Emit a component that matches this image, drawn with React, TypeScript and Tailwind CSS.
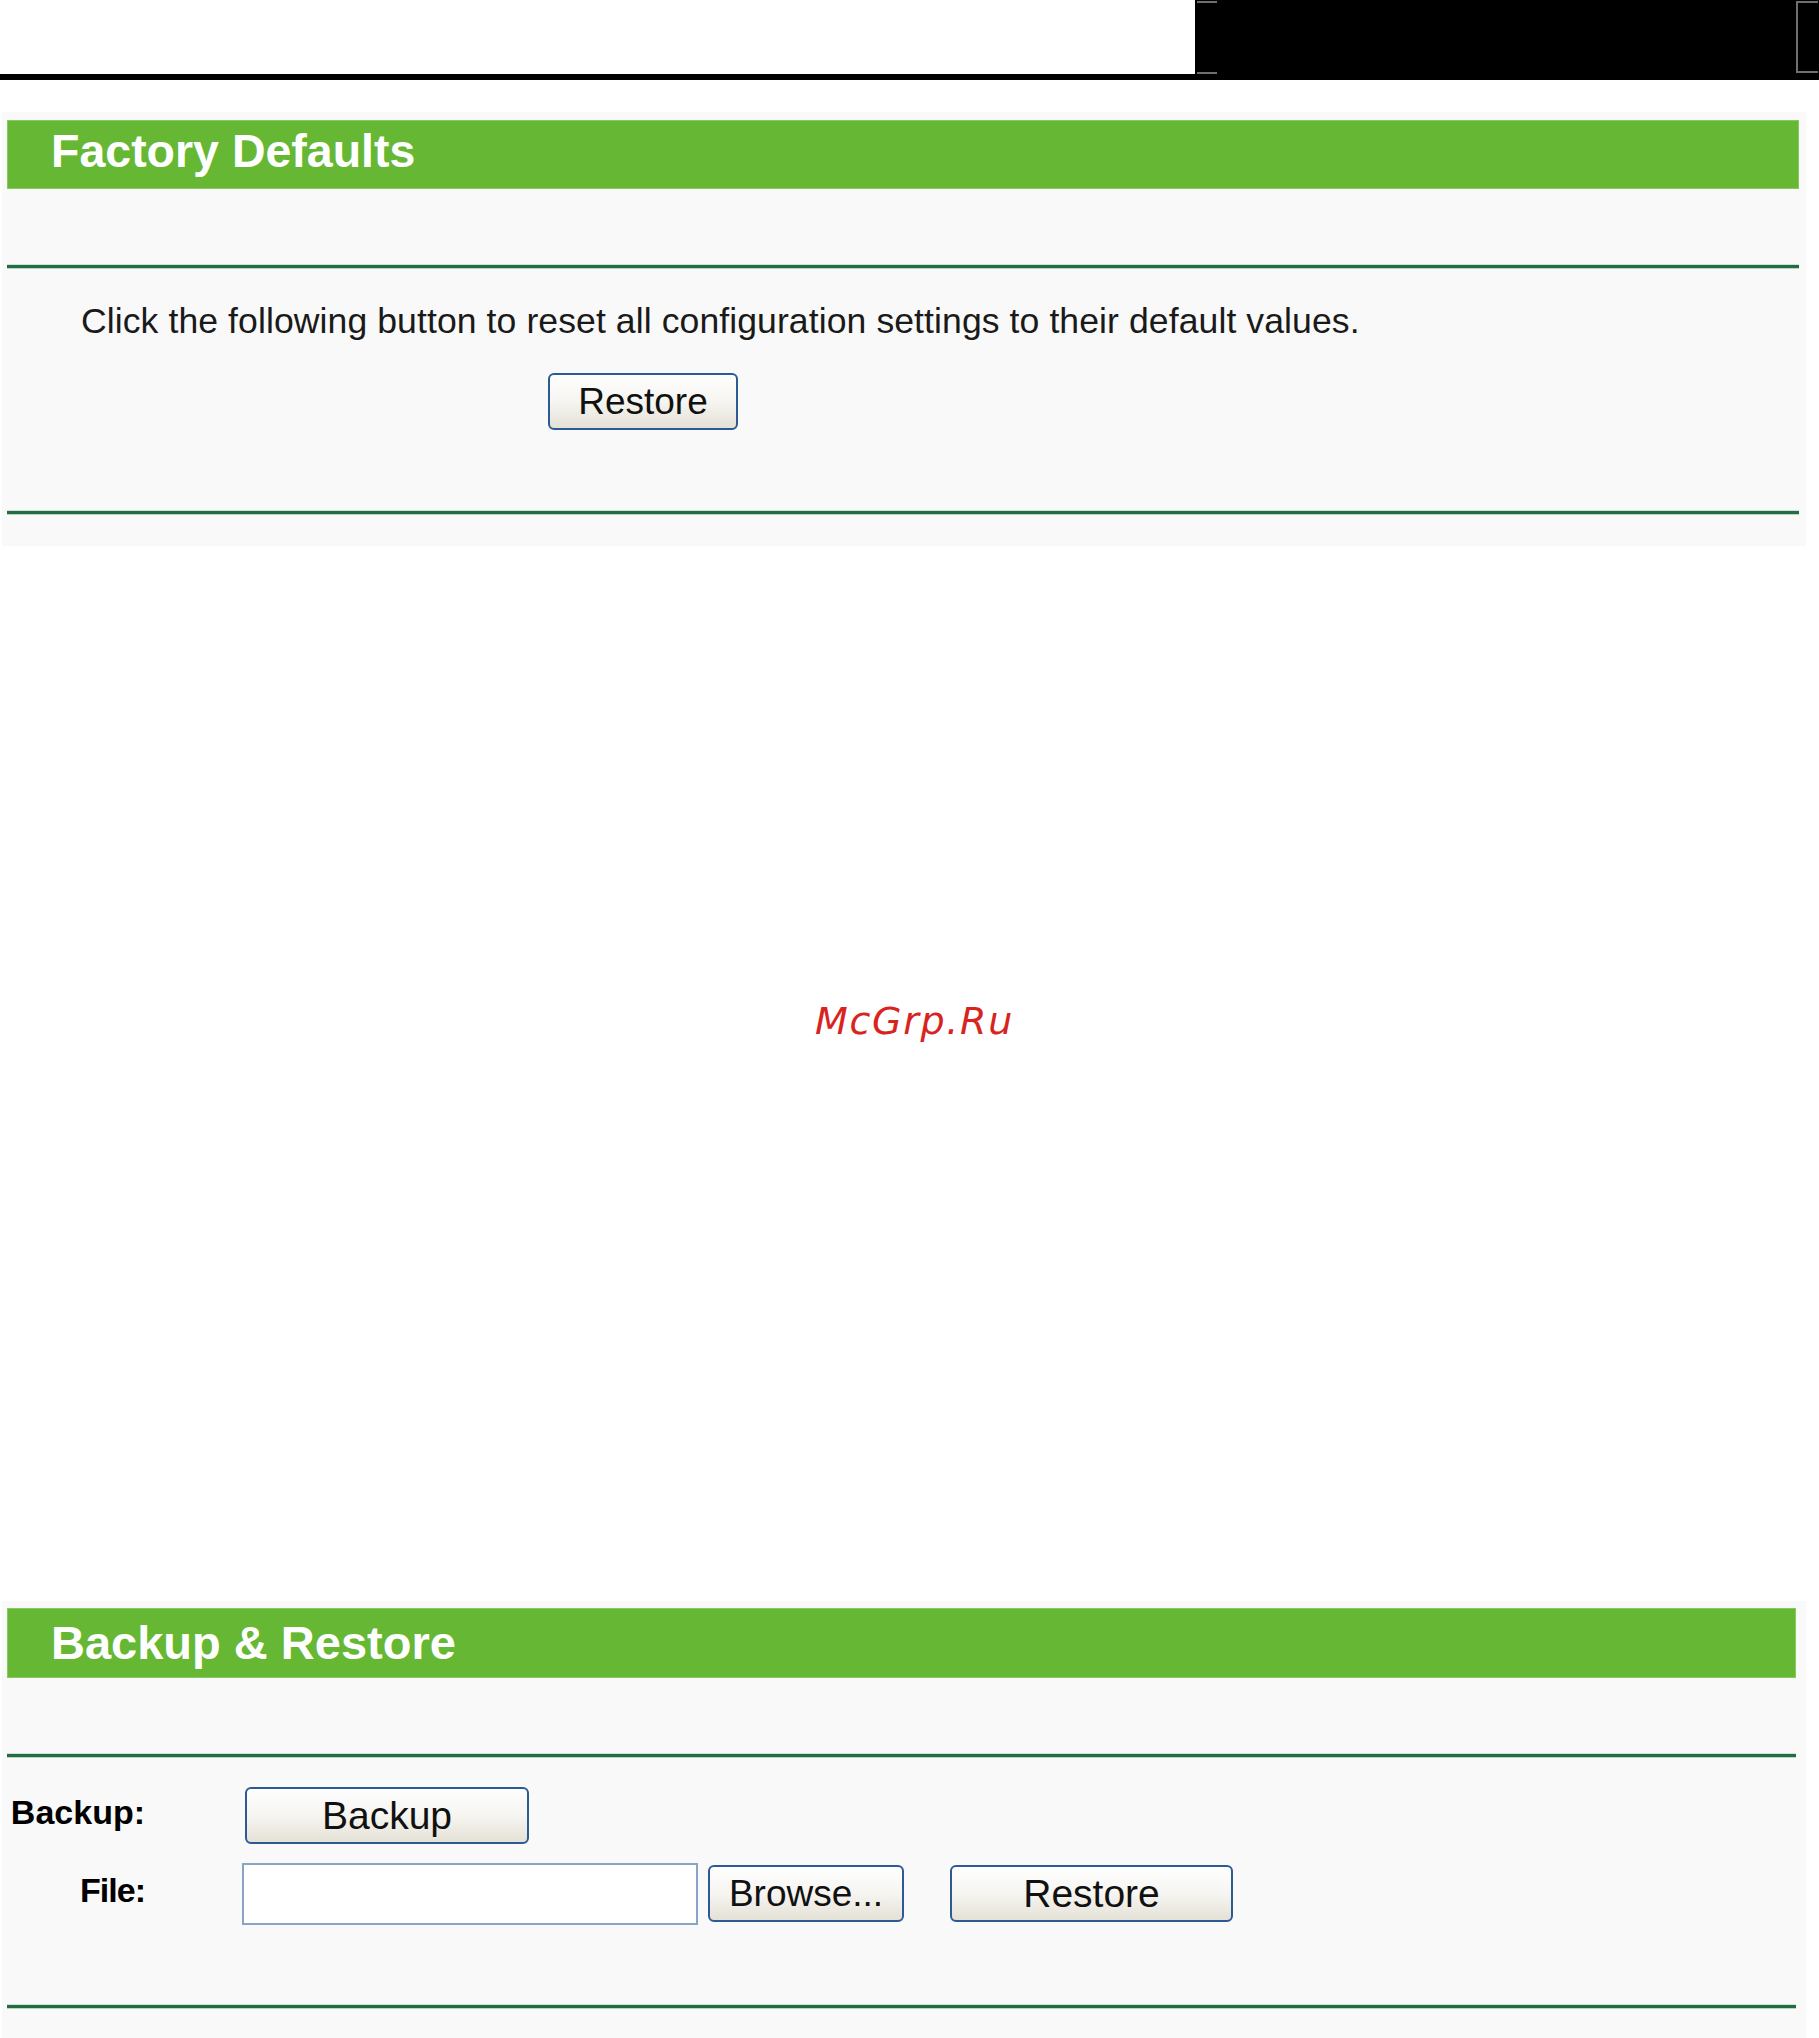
import type { ReactNode } from "react";

const sans = { fontFamily: '"Liberation Sans", Arial, sans-serif' };

function Rule() {
  return (
    <div className="h-[3px] bg-[#236d45] shadow-[0_-1px_0_#cfe2d5,0_1px_0_#b9d5c2]" />
  );
}

function TitleBar({ children, className = "" }: { children: ReactNode; className?: string }) {
  return (
    <div
      className={`flex h-[69px] items-center border border-[#86c960] bg-[#66b834] pl-[43px] ${className}`}
    >
      <span className="text-[46.5px] leading-none font-bold text-white">{children}</span>
    </div>
  );
}

function XpButton({ label, className = "", size = "text-[37px]" }: { label: string; className?: string; size?: string }) {
  return (
    <button
      type="button"
      className={`flex h-[57px] items-center justify-center rounded-[6px] border-2 border-[#2b5a95] bg-gradient-to-b from-[#fefefe] via-[#f6f5f1] to-[#e4e1d6] leading-none text-[#111] ${size} ${className}`}
    >
      {label}
    </button>
  );
}

function Header() {
  return (
    <div className="flex h-[80px]">
      <div className="w-[1195px] border-b-[6px] border-black bg-white" />
      <div className="relative flex-1 bg-black">
        {/* corner marks */}
        <div className="absolute top-[1px] left-[2px] h-[2px] w-[20px] bg-[#6f6f6f]" />
        <div className="absolute top-[72px] left-[2px] h-[2px] w-[20px] bg-[#6f6f6f]" />
        <div className="absolute top-[1px] left-[601px] h-[72px] w-[22px] border-2 border-r-0 border-[#6f6f6f]" />
      </div>
    </div>
  );
}

function FactoryDefaults() {
  return (
    <div className="mt-[32px] ml-[2px] w-[1804px] bg-[#f9f9f9] pt-[8px] pr-[7px] pb-[32px] pl-[5px]">
      <TitleBar className="pb-[6px]">Factory Defaults</TitleBar>
      <div className="h-[76px]" />
      <Rule />
      <p className="mt-[36px] pl-[74px] text-[35.6px] leading-none tracking-[0.08px] text-[#1a1a1a]">
        Click the following button to reset all configuration settings to their default values.
      </p>
      <div className="mt-[33px] pl-[541px]">
        <XpButton label="Restore" className="w-[190px]" />
      </div>
      <div className="h-[81px]" />
      <Rule />
    </div>
  );
}

function BackupRestore() {
  return (
    <div className="mt-[561px] ml-[2px] w-[1804px] bg-[#f9f9f9] pt-[7px] pr-[10px] pb-[30px] pl-[5px]">
      <TitleBar className="h-[70px] [&>span]:text-[47px]">Backup &amp; Restore</TitleBar>
      <div className="h-[76px]" />
      <Rule />
      <div className="mt-[30px] flex items-center">
        <span className="w-[138px] pb-[6px] text-right text-[34px] leading-none font-bold text-black">
          Backup:
        </span>
        <XpButton label="Backup" size="text-[39px]" className="ml-[100px] w-[284px]" />
      </div>
      <div className="mt-[19px] flex items-center">
        <span className="w-[138px] pb-[8px] text-right text-[34px] leading-none font-bold tracking-[-1px] text-black">
          File:
        </span>
        <input
          type="text"
          className="ml-[97px] h-[62px] w-[456px] border-2 border-[#8aa4c6] bg-white outline-none"
        />
        <XpButton label="Browse..." className="ml-[10px] w-[196px]" />
        <XpButton label="Restore" size="text-[39px]" className="ml-[46px] w-[283px]" />
      </div>
      <div className="h-[80px]" />
      <Rule />
    </div>
  );
}

export default function App() {
  return (
    <div className="min-h-[2038px] w-[1819px] overflow-hidden bg-white" style={sans}>
      <Header />
      <FactoryDefaults />
      <div className="mt-[456px] flex justify-center pl-[10px]">
        <span
          className="text-[38px] leading-none tracking-[1.7px] text-[#d8241f] italic"
          style={{ fontFamily: '"DejaVu Sans", Verdana, sans-serif' }}
        >
          McGrp.Ru
        </span>
      </div>
      <BackupRestore />
    </div>
  );
}
